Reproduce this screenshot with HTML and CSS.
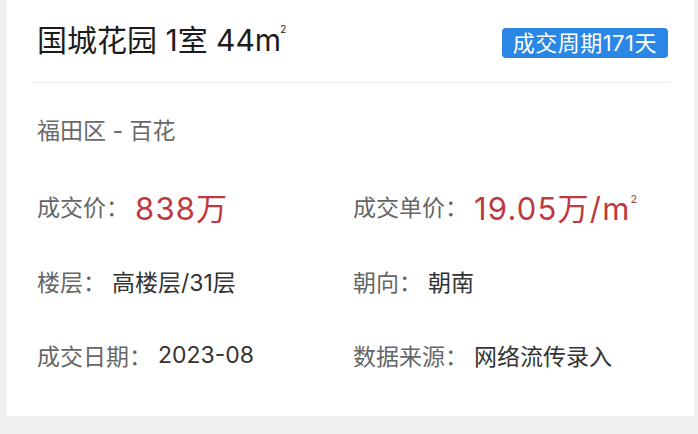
FILE: index.html
```html
<!DOCTYPE html>
<html lang="zh-CN">
<head>
<meta charset="utf-8">
<title>国城花园</title>
<link rel="stylesheet" href="styles.css">
</head>
<body>
<div class="card">
  <div class="header">
    <h1 class="title">国城花园 1室 44m<span class="sq">2</span></h1>
    <span class="badge">成交周期171天</span>
  </div>
  <div class="location">福田区 - 百花</div>
  <div class="grid">
    <div class="item"><span class="label">成交价：</span><span class="price">838万</span></div>
    <div class="item"><span class="label">成交单价：</span><span class="price">19.05万/m<span class="sq">2</span></span></div>
    <div class="item"><span class="label">楼层：</span><span class="value">高楼层/31层</span></div>
    <div class="item"><span class="label">朝向：</span><span class="value">朝南</span></div>
    <div class="item"><span class="label">成交日期：</span><span class="value">2023-08</span></div>
    <div class="item"><span class="label">数据来源：</span><span class="value">网络流传录入</span></div>
  </div>
</div>
</body>
</html>
```
FILE: styles.css
```css
* { box-sizing: border-box; }
html, body { margin: 0; padding: 0; }
body {
  background: #efefef;
  width: 698px;
  height: 434px;
  overflow: hidden;
  font-family: Inter, "Noto Sans CJK SC", sans-serif;
}
.card {
  margin-left: 7px;
  width: 687px;
  height: 416px;
  background: #ffffff;
  padding: 0 24px 0 26px;
}
.header {
  height: 83px;
  display: flex;
  justify-content: space-between;
  align-items: flex-start;
  padding: 28px 2px 0 4px;
  border-bottom: 1px solid #eeeeee;
}
.title {
  margin: -6px 0 0 0;
  font-size: 30px;
  line-height: 36px;
  font-weight: 400;
  color: #1c1c1c;
}
.sq {
  display: inline-block;
  font-size: 10px;
  line-height: 10px;
  position: relative;
  top: -18px;
  margin-left: -1px;
  letter-spacing: 0;
}
.badge {
  display: inline-block;
  height: 30px;
  line-height: 30px;
  padding: 0 11px;
  background: #2a87e6;
  color: #ffffff;
  font-size: 22px;
  letter-spacing: 0.5px;
  border-radius: 4px;
}
.location {
  margin: 33px 0 0 4px;
  line-height: 30px;
  font-size: 23px;
  color: #6a6a6a;
}
.grid {
  margin: 40px 0 0 4px;
  display: grid;
  grid-template-columns: 316px 1fr;
  row-gap: 34.5px;
}
.item {
  display: flex;
  align-items: center;
  height: 40px;
  white-space: nowrap;
}
.label {
  font-size: 23px;
  color: #666666;
  margin-right: 6px;
}
.value {
  font-size: 23px;
  color: #333333;
}
.price {
  font-size: 31px;
  color: #bc3a40;
  letter-spacing: 1.2px;
}
.price .sq { font-size: 11px; top: -17px; margin-left: 0; }
```
